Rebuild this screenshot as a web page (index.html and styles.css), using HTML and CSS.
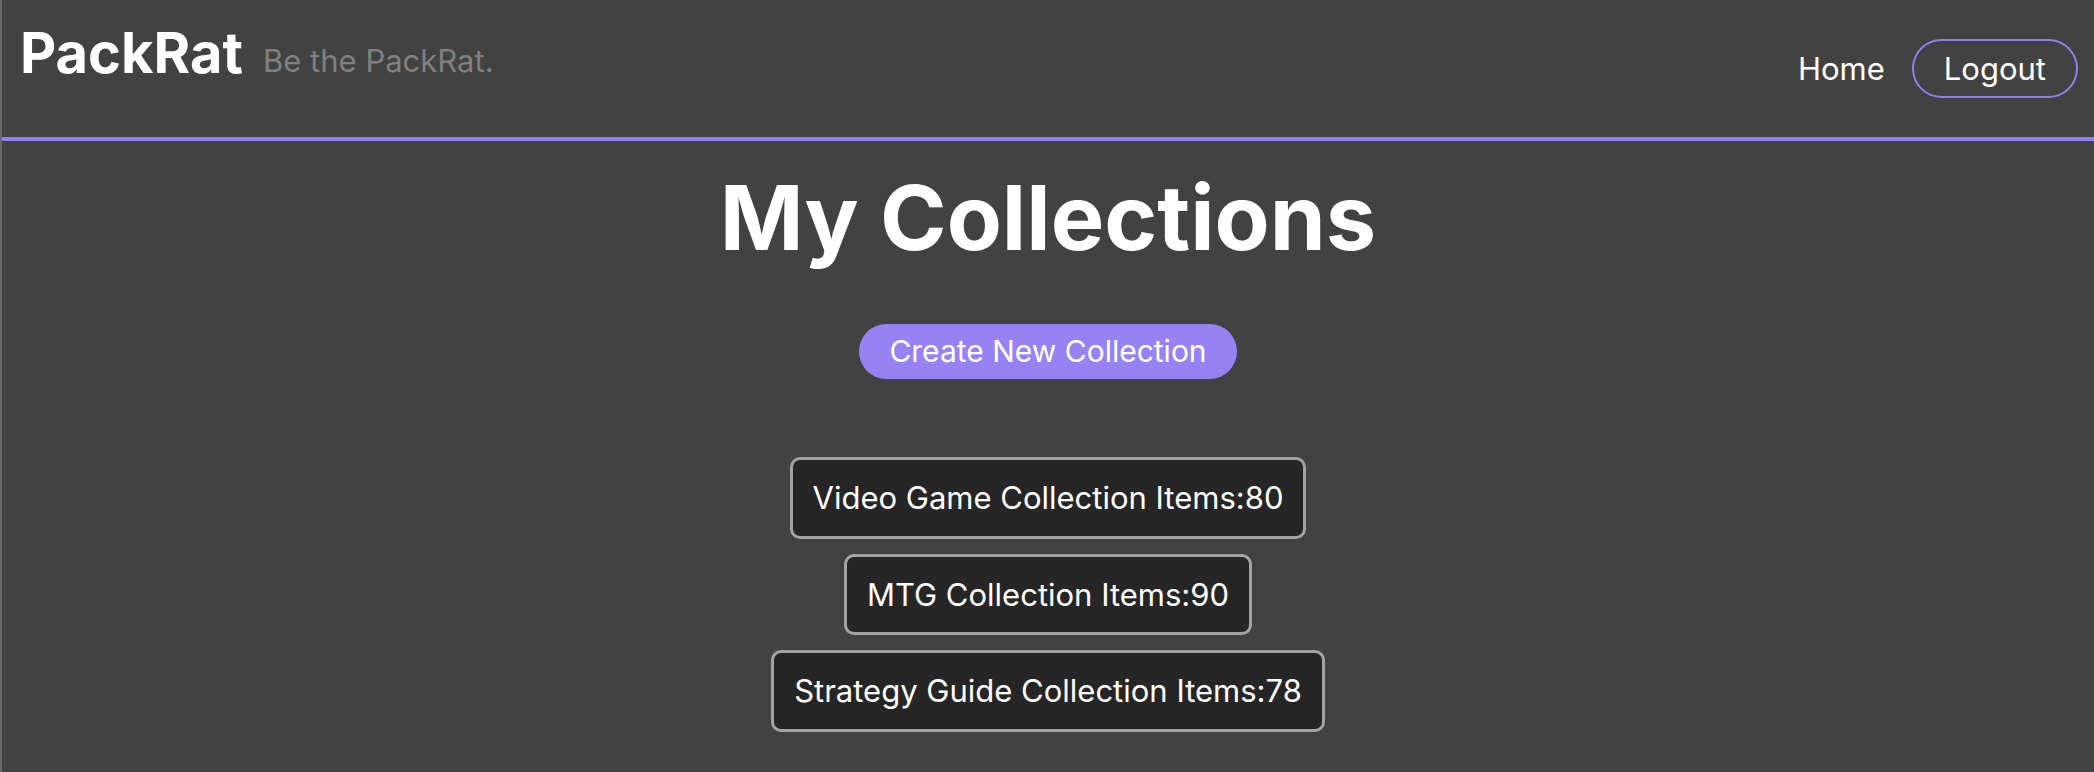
FILE: index.html
```html
<!DOCTYPE html>
<html lang="en">
<head>
<meta charset="utf-8">
<title>PackRat - My Collections</title>
<link rel="stylesheet" href="styles.css">
</head>
<body>
<div class="page">
  <header class="header">
    <div class="brand">
      <a class="logo" href="#">PackRat</a>
      <span class="tagline">Be the PackRat.</span>
    </div>
    <nav class="nav">
      <a class="nav-link" href="#">Home</a>
      <a class="nav-button" href="#">Logout</a>
    </nav>
  </header>
  <main class="main">
    <h1 class="title">My Collections</h1>
    <button class="create-btn" type="button">Create New Collection</button>
    <ul class="collections">
      <li class="collection">Video Game Collection Items:80</li>
      <li class="collection">MTG Collection Items:90</li>
      <li class="collection">Strategy Guide Collection Items:78</li>
    </ul>
  </main>
</div>
</body>
</html>
```

FILE: styles.css
```css
* {
  box-sizing: border-box;
}

html, body {
  margin: 0;
  padding: 0;
  background: #424242;
}

body {
  font-family: Inter, "Noto Sans", "Liberation Sans", sans-serif;
  color: #ffffff;
}

.page {
  min-height: 772px;
  border-left: 2px solid #6a6a6a;
}

.header {
  display: flex;
  justify-content: space-between;
  align-items: flex-start;
  height: 141px;
  padding: 0 16px 0 18px;
  border-bottom: 4px solid #9280ee;
}

.brand {
  display: flex;
  align-items: flex-start;
  gap: 20px;
  padding-top: 20px;
}

.logo {
  font-size: 56px;
  font-weight: 700;
  line-height: 1.2;
  color: #ffffff;
  text-decoration: none;
}

.tagline {
  margin-top: 22px;
  font-size: 31px;
  line-height: 1.2;
  color: #808080;
}

.nav {
  display: flex;
  align-items: center;
  gap: 27px;
  padding-top: 39px;
}

.nav-link {
  font-size: 31px;
  line-height: 1.2;
  color: #ffffff;
  text-decoration: none;
}

.nav-button {
  font-size: 31px;
  line-height: 1.2;
  color: #ffffff;
  text-decoration: none;
  padding: 9px 30px;
  border: 2px solid #9280ee;
  border-radius: 999px;
}

.main {
  display: flex;
  flex-direction: column;
  align-items: center;
}

.title {
  margin: 23px 0 0;
  font-size: 90px;
  font-weight: 700;
  line-height: 1.2;
}

.create-btn {
  margin-top: 52px;
  font-family: inherit;
  font-size: 30px;
  line-height: 35px;
  color: #ffffff;
  background: #9682f2;
  border: none;
  border-radius: 999px;
  padding: 10px 30px;
}

.collections {
  list-style: none;
  margin: 78px 0 0;
  padding: 0;
  display: flex;
  flex-direction: column;
  align-items: center;
  gap: 15px;
}

.collection {
  font-size: 31px;
  line-height: 1.15;
  padding: 20px 20px;
  background: #262626;
  border: 3px solid #a4a4a4;
  border-radius: 10px;
}
```
